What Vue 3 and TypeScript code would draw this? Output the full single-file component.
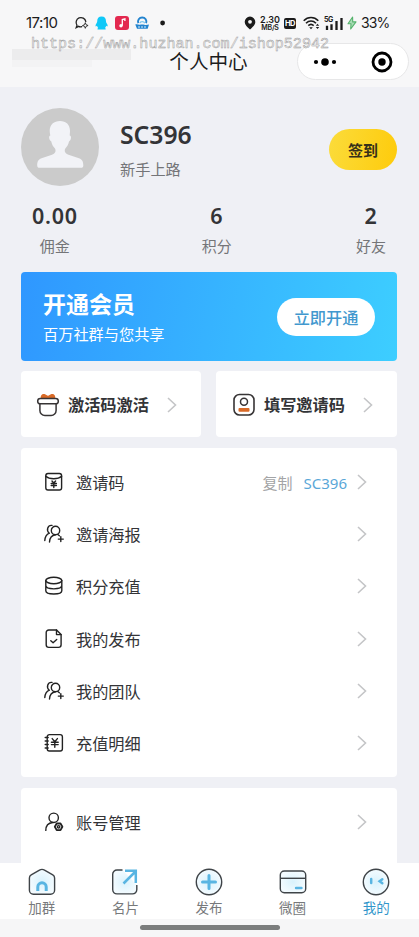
<script setup lang="ts">
interface Stat { value: string; label: string }
interface MenuItem { label: string; icon: string; code?: string }
interface Tab { label: string; icon: string; active?: boolean }

const stats: Stat[] = [
  { value: '0.00', label: '佣金' },
  { value: '6', label: '积分' },
  { value: '2', label: '好友' },
]
const menu: MenuItem[] = [
  { label: '邀请码', icon: 'code', code: 'SC396' },
  { label: '邀请海报', icon: 'team' },
  { label: '积分充值', icon: 'coins' },
  { label: '我的发布', icon: 'doc' },
  { label: '我的团队', icon: 'team' },
  { label: '充值明细', icon: 'ledger' },
]
const tabs: Tab[] = [
  { label: '加群', icon: 'home' },
  { label: '名片', icon: 'share' },
  { label: '发布', icon: 'plus' },
  { label: '微圈', icon: 'card' },
  { label: '我的', icon: 'me', active: true },
]
</script>

<template>
  <div class="page">
    <header class="top">
      <div class="status">
        <span class="time">17:10</span>
        <svg class="apps" width="92" height="16" viewBox="0 0 92 16">
          <g fill="none" stroke="#222" stroke-width="1.3" stroke-linecap="round">
            <path d="M4.600 11.400 2.200 12.700l.8-2.400A4.900 4.900 0 1 1 11.800 6.500" />
            <path d="M4.600 11.400c1 .5 2.200.6 3.200.2" />
          </g>
          <path d="m11.300 7.700.8 2 2 .8-2 .8-.8 2-.8-2-2-.8 2-.8z" fill="none" stroke="#222" stroke-width=".9" />
          <path d="M27.600 1.500c3 0 4.400 2.100 4.400 4.700 0 1.100.4 1.500 1 2.600 1 1.900.8 3-.1 2.500l-.7-.6c-.2 1-.7 1.700-1.200 2.200 1 .3 1.200 1.600-.3 1.600h-6.200c-1.500 0-1.300-1.300-.3-1.600-.5-.5-1-1.200-1.200-2.200l-.7.600c-.9.500-1.100-.6-.1-2.500.6-1.100 1-1.500 1-2.600 0-2.600 1.400-4.700 4.400-4.700z" fill="#10c8f8" />
          <rect x="41" y="1" width="14" height="14" rx="3" fill="#e3284f" />
          <path d="M48.300 10.700V4.500l2.600-.6v2" fill="none" stroke="#fff" stroke-width="1.300" />
          <circle cx="47" cy="10.800" r="1.700" fill="#fff" />
          <path d="M64.300 8.200a4.200 4.200 0 1 1 7.800 0" fill="none" stroke="#2384cf" stroke-width="1.900" />
          <path d="M66 8.200c.3-2 4.100-2 4.700 0" fill="none" stroke="#7cc6ee" stroke-width="1.300" />
          <path d="M61.300 9.500c2-.6 3 .4 4.500.2s3-.6 4.500 0 3 .2 4.700-.2l-1.300 4.300H63z" fill="#2384cf" />
          <path d="M64 12h9" stroke="#d8eefb" stroke-width="1.100" stroke-dasharray="2 1" />
          <circle cx="88.600" cy="8" r="2.400" fill="#1b1b1b" />
        </svg>
        <svg class="pin" width="12" height="14" viewBox="0 0 12 14">
          <path d="M6 .6a5.300 5.300 0 0 1 5.300 5.300c0 3-2.700 5-5.300 7.700C3.400 10.900.7 8.900.7 5.900A5.300 5.300 0 0 1 6 .6z" fill="#1b1b1b" />
          <circle cx="6" cy="5.800" r="1.900" fill="#f7f7f8" />
        </svg>
        <span class="speed"><b>2.30</b><b class="unit">MB/S</b></span>
        <span class="hd">HD</span>
        <svg class="wifi" width="17" height="14" viewBox="0 0 17 14">
          <g fill="none" stroke="#1b1b1b" stroke-width="1.600">
            <path d="M.7 4.700c4.200-4.300 10.400-4.300 14.600 0" />
            <path d="M3 7.300c3-3 7-3 10 0" />
            <path d="M5.300 9.700c1.700-1.600 3.700-1.600 5.400 0" />
          </g>
          <path d="M6.200 11.200h3.600L8 13.300z" fill="#1b1b1b" />
          <path d="m12.800 9.700 1.700-2 1.700 2zM12.800 11l1.700 2 1.700-2z" fill="#1b1b1b" />
        </svg>
        <span class="cell">
          <i>5G</i>
          <svg width="18" height="13" viewBox="0 0 18 13">
            <path d="M2 8.800V13M6.500 7.300V13M11.500 4V13M16.500 1V13" stroke="#1b1b1b" stroke-width="2.300" />
          </svg>
        </span>
        <svg class="bolt" width="10" height="14" viewBox="0 0 10 14">
          <path d="M5.600 1 1 7.700h3L3.700 13 9 5.900H5.700z" fill="#a9dcb6" stroke="#55b36c" stroke-width="1.100" stroke-linejoin="round" />
        </svg>
        <span class="battery">33%</span>
      </div>
      <div class="nav">
        <div class="redacted"><i></i><i></i></div>
        <h1>个人中心</h1>
        <div class="capsule">
          <svg width="24" height="10" viewBox="0 0 24 10">
            <circle cx="3" cy="5" r="2.100" /><circle cx="12" cy="5" r="3.800" /><circle cx="21" cy="5" r="2.100" />
          </svg>
          <span class="divider"></span>
          <svg width="22" height="22" viewBox="0 0 22 22">
            <circle cx="11" cy="11" r="9" fill="none" stroke="#000" stroke-width="2.800" />
            <circle cx="11" cy="11" r="3.700" />
          </svg>
        </div>
      </div>
      <div class="watermark">https://www.huzhan.com/ishop52942</div>
    </header>

    <main class="content">
      <section class="profile">
        <svg class="avatar" width="78" height="78" viewBox="0 0 78 78">
          <circle cx="39" cy="39" r="39" fill="#cbcbcb" />
          <path d="M39 13c6 0 10 3.500 10 10 0 1.500-.2 3-.3 4.500 1.900.2 1.800 4.500-.7 6-.5 3-2 5-3.700 7-1.500 3 .2 5 3.200 6.200L58 50.200c3.500 1.400 4.300 3.800 4.300 7.300 0 1.600-.8 2.300-2.300 2.300H18.500c-1.500 0-2.300-.7-2.300-2.300 0-3.500.8-5.900 4.300-7.300L31 46.700c3-1.200 4.400-3.200 3-6.200-1.800-2-3.200-4-3.700-7-2.500-1.500-2.800-5.800-1-6C29 26 28.700 24.500 28.700 23 28.700 16.500 33 13 39 13z" fill="#f2f3f7" />
        </svg>
        <div class="who">
          <strong>SC396</strong>
          <span>新手上路</span>
        </div>
        <button class="sign">签到</button>
      </section>

      <section class="stats">
        <div v-for="s in stats" :key="s.label" class="stat">
          <strong>{{ s.value }}</strong>
          <span>{{ s.label }}</span>
        </div>
      </section>

      <section class="banner">
        <div class="pitch">
          <strong>开通会员</strong>
          <span>百万社群与您共享</span>
        </div>
        <button class="open">立即开通</button>
      </section>

      <section class="pair">
        <div class="quick">
          <svg class="qicon" width="24" height="24" viewBox="0 0 24 24">
            <path d="M5 6C4 2 6.500.4 8.500 1c1.500.3 2.500 1.700 3.500 1.700s2-1.400 3.500-1.700C17.500.4 20 2 19 6z" fill="#d96a27" />
            <rect x="1.700" y="5.500" width="20.600" height="5.300" rx="2.600" fill="#fff" stroke="#373435" stroke-width="1.500" />
            <path d="M3.900 10.800v6.700a5 5 0 0 0 5 5h6.200a5 5 0 0 0 5-5v-6.700" fill="none" stroke="#373435" stroke-width="1.500" />
          </svg>
          <b>激活码激活</b>
          <svg class="arrow" width="10" height="16" viewBox="0 0 10 16"><path d="m1 1 7.500 7L1 15" /></svg>
        </div>
        <div class="quick invite">
          <svg class="qicon" width="24" height="24" viewBox="0 0 24 24">
            <rect x="2" y="1.500" width="20" height="20.500" rx="5.500" fill="none" stroke="#373435" stroke-width="1.600" />
            <circle cx="12" cy="8.800" r="3.500" fill="none" stroke="#373435" stroke-width="1.500" />
            <rect x="6.500" y="15" width="11" height="3.800" rx="1" fill="#d96a27" />
          </svg>
          <b>填写邀请码</b>
          <svg class="arrow" width="10" height="16" viewBox="0 0 10 16"><path d="m1 1 7.500 7L1 15" /></svg>
        </div>
      </section>

      <section class="list">
        <div v-for="m in menu" :key="m.label" class="row">
          <svg class="micon" width="20" height="20" viewBox="0 0 20 20">
            <template v-if="m.icon === 'code'">
              <rect x="1.800" y="1.500" width="15.800" height="16.500" rx="2.200" />
              <path d="M1.800 4.300c3.500 3.200 12.300 3.200 15.800 0" />
              <path d="m8 9 1.800 2 1.800-2M9.800 11v4.500M7.200 11.500h5.200M7.200 13.500h5.200" />
            </template>
            <template v-else-if="m.icon === 'team'">
              <circle cx="11.500" cy="6.500" r="4.200" />
              <path d="M5.500 18c.2-4.400 2.500-6.800 6-7.300M8 1.400C3.700.8 1.900 6.500 5.300 9.200M5.300 9.200C2.500 10.500 1 13.300.8 16.500M13.800 10.500l1.600 1.300" />
              <path d="M16.800 12.600v5M14.300 15.100h5" />
            </template>
            <template v-else-if="m.icon === 'coins'">
              <ellipse cx="9.800" cy="4.500" rx="8" ry="3.200" />
              <path d="M1.800 4.500v10.300c0 4.300 16 4.300 16 0V4.500M1.800 9.600c0 4.300 16 4.300 16 0" />
            </template>
            <template v-else-if="m.icon === 'doc'">
              <path d="M12.500 1H4.800a2.600 2.600 0 0 0-2.600 2.600v12.200a2.600 2.600 0 0 0 2.600 2.600h9.700a2.600 2.600 0 0 0 2.600-2.600V5.600z" />
              <path d="M12.500 1v4.600h4.600M6.800 11.700l2.300 2.100 3.600-3.300" />
            </template>
            <template v-else>
              <rect x="3.200" y="1.600" width="15.200" height="16.400" rx="2.200" />
              <path d="M1.200 4.500h3M1.200 8h3M1.200 11.500h3M1.200 15h3" />
              <path d="m8.200 5.600 2.600 3.200 2.600-3.200M10.800 8.800v5.500M7.400 9.200h6.800M7.400 11.600h6.800" />
            </template>
          </svg>
          <span class="name">{{ m.label }}</span>
          <template v-if="m.code">
            <span class="copy">复制</span>
            <span class="code">{{ m.code }}</span>
          </template>
          <svg class="arrow" width="10" height="16" viewBox="0 0 10 16"><path d="m1 1 7.500 7L1 15" /></svg>
        </div>
      </section>

      <section class="list account">
        <div class="row">
          <svg class="micon" width="20" height="20" viewBox="0 0 20 20">
            <circle cx="9.700" cy="5.800" r="4.700" />
            <path d="M1.800 18.400c0-4.600 2.900-7.500 7-7.900" />
            <circle cx="14.600" cy="14.800" r="1.200" />
            <path d="m12.700 11.500h3.800l1.900 3.300-1.900 3.300h-3.800l-1.900-3.300z" stroke-width="1.800" />
          </svg>
          <span class="name">账号管理</span>
          <svg class="arrow" width="10" height="16" viewBox="0 0 10 16"><path d="m1 1 7.500 7L1 15" /></svg>
        </div>
      </section>
    </main>

    <nav class="tabs">
      <div v-for="t in tabs" :key="t.label" class="tab" :class="{ active: t.active }">
        <svg width="28" height="28" viewBox="0 0 28 28">
          <defs>
            <radialGradient :id="'glow-' + t.icon">
              <stop offset="0" stop-color="#d9f2fc" />
              <stop offset="1" stop-color="#f3fbff" />
            </radialGradient>
          </defs>
          <g :fill="`url(#glow-${t.icon})`" stroke="#3f4448" stroke-width="1.400" stroke-linejoin="round">
            <path v-if="t.icon === 'home'" d="M11.500 2.100 3.200 6.800A3.600 3.600 0 0 0 1.400 10v12.200a4 4 0 0 0 4 4h17.200a4 4 0 0 0 4-4V10a3.600 3.600 0 0 0-1.800-3.200l-8.300-4.700a5 5 0 0 0-5 0z" />
            <path v-else-if="t.icon === 'share'" d="M11.500 2H6a4.300 4.300 0 0 0-4.300 4.300v15.300A4.300 4.300 0 0 0 6 25.900h15.500a4.300 4.300 0 0 0 4.300-4.300V17" />
            <rect v-else-if="t.icon === 'card'" x="1.300" y="3" width="25.400" height="21.800" rx="4" />
            <circle v-else cx="14" cy="14" r="12.700" />
          </g>
          <g fill="none" stroke="#59b5e2" stroke-width="3">
            <path v-if="t.icon === 'home'" d="M9.800 23v-4a4.200 4.200 0 0 1 8.400 0v4" />
            <path v-else-if="t.icon === 'share'" d="M12.500 15.500 24 4M14 2.700h10.800v12.300" stroke-width="2.500" />
            <path v-else-if="t.icon === 'plus'" d="M14 7.500v13M7.500 14h13" stroke-linecap="round" />
            <path v-else-if="t.icon === 'card'" d="M17 20h5.500" stroke-width="2.400" stroke-linecap="round" />
            <path v-else d="M9.200 11v4M20.300 11.200l-2.700 2 2.700 2" stroke-width="2.500" stroke-linecap="round" />
          </g>
          <path v-if="t.icon === 'card'" d="M1.500 10.300h25" stroke="#3f4448" stroke-width="1.400" />
        </svg>
        <span>{{ t.label }}</span>
      </div>
    </nav>
    <footer class="gesture"><i></i></footer>
  </div>
</template>

<style>
body {
  margin: 0;
  background: #eff0f5;
}
</style>

<style scoped>
* {
  box-sizing: border-box;
}
.page {
  width: 419px;
  height: 937px;
  display: flex;
  flex-direction: column;
  overflow: hidden;
  background: #eff0f5;
  color: #333437;
  font-family: "Noto Sans", "Noto Sans CJK SC", sans-serif;
}
button {
  border: 0;
  padding: 0;
  font-family: inherit;
}
svg {
  display: block;
  flex: none;
}
.top {
  position: relative;
  flex: none;
  height: 87px;
  padding-top: 13px;
  background: #f7f7f8;
}
.status {
  display: flex;
  align-items: center;
  height: 20px;
  padding-left: 26px;
  color: #1b1b1b;
}
.time {
  width: 48px;
  font: 400 15px/20px Inter, sans-serif;
  letter-spacing: -0.5px;
}
.pin {
  margin-left: 78px;
}
.speed {
  display: flex;
  flex-direction: column;
  align-items: center;
  width: 20px;
  margin-left: 4px;
}
.speed b {
  font: 600 9px/8px Inter, sans-serif;
}
.speed .unit {
  font-size: 7px;
  line-height: 7px;
  letter-spacing: -0.2px;
}
.hd {
  width: 12px;
  height: 11px;
  margin-left: 4px;
  border-radius: 2px;
  background: #1b1b1b;
  color: #fff;
  font: 700 7.5px/11px Inter, sans-serif;
  text-align: center;
  letter-spacing: -0.5px;
}
.wifi {
  margin-left: 7px;
}
.cell {
  position: relative;
  margin-left: 5px;
}
.cell i {
  position: absolute;
  left: -1px;
  top: -1px;
  font: 700 7px/7px Inter, sans-serif;
  letter-spacing: -0.4px;
}
.bolt {
  margin-left: 4px;
}
.battery {
  margin-left: 4px;
  font: 400 14px/20px Inter, sans-serif;
  letter-spacing: -0.9px;
}
.nav {
  display: grid;
  grid-template-columns: 1fr auto 1fr;
  align-items: center;
  height: 36px;
  margin-top: 10px;
  padding: 0 10px 0 8px;
}
.nav h1 {
  margin: 0;
  padding-top: 1px;
  color: #1c1c1c;
  font-size: 19.6px;
  font-weight: 400;
  line-height: 36px;
}
.redacted {
  align-self: start;
  padding: 6px 0 0 4px;
}
.redacted i {
  display: block;
  width: 119px;
  height: 11px;
  background: #ececed;
}
.redacted i + i {
  width: 80px;
  height: 7px;
  background: #f3f3f4;
}
.capsule {
  justify-self: end;
  display: flex;
  align-items: center;
  width: 112px;
  height: 37px;
  padding: 1px 15px 0;
  border: 1px solid #e7e7e8;
  border-radius: 19px;
  background: #fff;
}
.divider {
  width: 1px;
  height: 22px;
  margin: 0 18px 0 16px;
  background: #dededf;
}
.watermark {
  position: absolute;
  left: 31px;
  top: 34px;
  color: #f0f0f0;
  font: 15.050px/20px "Liberation Mono", monospace;
  -webkit-text-stroke: 0.45px #999;
  white-space: nowrap;
}
.content {
  flex: 1;
  min-height: 0;
  overflow: hidden;
  padding: 21px 22px 0 21px;
}
.profile {
  display: flex;
  align-items: center;
  height: 78px;
}
.who {
  display: flex;
  flex-direction: column;
  flex: 1;
  margin-left: 21px;
  padding-top: 5px;
}
.who strong {
  font: 600 24.700px/32px "Noto Sans", sans-serif;
}
.who span {
  margin-top: 6px;
  color: #747578;
  font-size: 15.200px;
  line-height: 24px;
}
.sign {
  width: 68px;
  height: 41px;
  margin-top: 4px;
  border-radius: 21px;
  background: linear-gradient(100deg, #fbdc3b, #fecb0b);
  color: #36301a;
  font-size: 15px;
  font-weight: 700;
}
.stats {
  display: flex;
  justify-content: space-between;
  padding: 15px 11px 0;
}
.stat {
  display: flex;
  flex-direction: column;
  align-items: center;
}
.stat strong {
  font: 600 21.500px/30px "Noto Sans", sans-serif;
  letter-spacing: 0.7px;
}
.stat span {
  margin-top: 4px;
  color: #747578;
  font-size: 15px;
  line-height: 22px;
}
.banner {
  display: flex;
  align-items: center;
  justify-content: space-between;
  height: 89px;
  margin-top: 15px;
  padding: 0 22px;
  border-radius: 4px;
  background: linear-gradient(100deg, #2f97ff, #3dceff);
  color: #fff;
}
.pitch {
  display: flex;
  flex-direction: column;
  padding-top: 3px;
}
.pitch strong {
  font-size: 23px;
  line-height: 32px;
}
.pitch span {
  font-size: 15.200px;
  line-height: 28px;
}
.open {
  width: 98px;
  height: 38px;
  border-radius: 19px;
  background: #fff;
  color: #4298ce;
  font-size: 16.200px;
  font-weight: 500;
}
.pair {
  display: grid;
  grid-template-columns: 180px 181px;
  gap: 15px;
  margin-top: 10px;
}
.quick {
  display: flex;
  align-items: center;
  height: 66px;
  padding: 1px 24px 0 15px;
  border-radius: 4px;
  background: #fff;
}
.quick.invite {
  padding-left: 16px;
}
.quick b {
  flex: 1;
  margin-left: 8px;
  padding-top: 1px;
  font-size: 16.200px;
  line-height: 24px;
  font-weight: 700;
  white-space: nowrap;
}
.arrow path {
  fill: none;
  stroke: #c4c5c7;
  stroke-width: 1.6;
}
.list {
  margin-top: 11px;
  padding: 8px 30px 8px 23px;
  border-radius: 4px;
  background: #fff;
}
.row {
  display: flex;
  align-items: center;
  height: 52.200px;
}
.micon {
  fill: none;
  stroke: #222;
  stroke-width: 1.4;
  stroke-linecap: round;
  stroke-linejoin: round;
}
.name {
  flex: 1;
  margin-left: 12px;
  padding-top: 2px;
  font-size: 16.200px;
  line-height: 24px;
}
.copy {
  padding-top: 1px;
  color: #a3a4a6;
  font-size: 15px;
}
.code {
  margin: 1px 10px 0 11px;
  color: #5aa7d8;
  font-size: 15px;
}
.account {
  height: 130px;
}
.tabs {
  display: grid;
  grid-template-columns: repeat(5, 1fr);
  flex: none;
  height: 56px;
  padding-right: 1px;
  background: #fff;
}
.tab {
  display: flex;
  flex-direction: column;
  align-items: center;
  padding-top: 5px;
  color: #77797b;
}
.tab span {
  margin-top: 2px;
  font-size: 13.500px;
  line-height: 20px;
}
.tab.active {
  color: #3296cb;
}
.gesture {
  display: flex;
  justify-content: center;
  flex: none;
  height: 18px;
  padding-top: 6px;
  background: #f6f6f7;
}
.gesture i {
  width: 140px;
  height: 5px;
  border-radius: 3px;
  background: #7b7d7d;
}
</style>
